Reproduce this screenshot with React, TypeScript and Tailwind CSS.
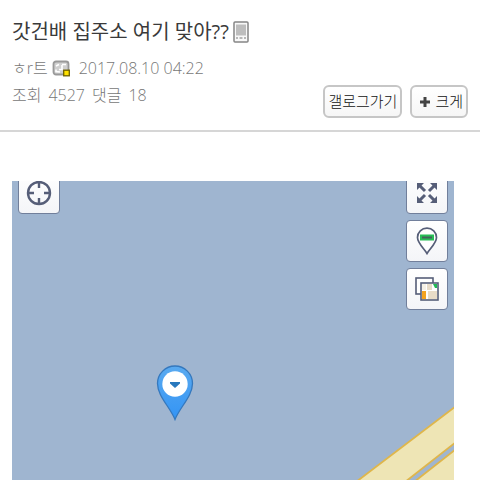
import React from 'react';

const fontStack = "font-['Open_Sans','Noto_Sans_CJK_KR',sans-serif]";

const PhoneIcon = () => (
  <svg width="16" height="22" viewBox="0 0 16 22" className="shrink-0" aria-hidden="true">
    <rect x="1" y="1" width="14" height="20" rx="1" fill="#f8f8f8" stroke="#858585" strokeWidth="1.5" />
    <rect x="3" y="3.5" width="10" height="11" fill="#bdbdbd" />
    <path d="M3 17h2M6.5 17h3M11 17h2" stroke="#777" strokeWidth="1.2" />
  </svg>
);

const MemberIcon = () => (
  <svg width="19" height="17" viewBox="0 0 19 17" className="shrink-0" aria-hidden="true">
    <rect x="1.5" y="1.5" width="15" height="13" rx="2.5" fill="#cfcfcf" stroke="#999" strokeWidth="1.8" />
    <path d="M4 6l3-1.5M10 4.5h4M10 5v4.5H7M4 9.5v2l4 .5" fill="none" stroke="#fff" strokeWidth="1.6" />
    <rect x="11.7" y="10.2" width="5.6" height="5.6" fill="#ffe100" stroke="#6e6100" strokeWidth="1.3" />
  </svg>
);

const TargetIcon = () => (
  <svg width="26" height="26" viewBox="0 0 26 26" fill="none" stroke="#565e78" strokeWidth="2.4" aria-hidden="true">
    <circle cx="13" cy="13" r="11" />
    <path d="M13 2v6M13 18v6M2 13h6M18 13h6" />
  </svg>
);

const ExpandIcon = () => (
  <svg width="22" height="22" viewBox="0 0 22 22" fill="#565e78" stroke="#565e78" aria-hidden="true">
    <path d="M3 3l6 6M19 3l-6 6M3 19l6-6M19 19l-6-6" strokeWidth="3" />
    <path d="M1 1h7L1 8zM21 1v7l-7-7zM1 21v-7l7 7zM21 21h-7l7-7z" stroke="none" />
  </svg>
);

const StreetIcon = () => (
  <svg width="22" height="28" viewBox="0 0 22 28" aria-hidden="true">
    <path d="M11 26.5C8 21.5 1.5 16 1.5 10.5a9.5 9.3 0 0119 0C20.5 16 14 21.5 11 26.5z" fill="#fff" stroke="#565e78" strokeWidth="1.7" />
    <rect x="4" y="7.5" width="14" height="6" fill="#27bd55" />
    <path d="M6 10.5h10" stroke="#44605c" strokeWidth="2" />
  </svg>
);

const LayersIcon = () => (
  <svg width="24" height="24" viewBox="0 0 24 24" aria-hidden="true">
    <rect x="1" y="1" width="17" height="16" fill="#fff" stroke="#565e78" strokeWidth="1.6" />
    <rect x="6" y="6" width="17" height="17" fill="#fff" stroke="#565e78" strokeWidth="1.6" />
    <path d="M7 7h4v6H7z" fill="#f6f1e6" />
    <path d="M12 7h5v6h-5zM13 14h9v8h-9z" fill="#e8dcc8" />
    <path d="M7 14h4v8H7z" fill="#f4a321" />
    <path d="M18 7h4v4h-2z" fill="#22b956" />
  </svg>
);

const PinIcon = () => (
  <svg width="38" height="56" viewBox="0 0 38 56" aria-hidden="true">
    <defs>
      <linearGradient id="pin" x1="0" y1="0" x2="0" y2="1">
        <stop offset="0" stopColor="#5aaaf0" />
        <stop offset="1" stopColor="#3394f5" />
      </linearGradient>
    </defs>
    <path d="M19 54.5C14 42 1.5 31 1.5 18.5a17.5 17.5 0 0135 0C36.5 31 24 42 19 54.5z" fill="url(#pin)" stroke="#3578bd" strokeWidth="1.3" />
    <circle cx="19" cy="19" r="12.7" fill="#fff" />
    <path d="M14 17h10v1.5L19 23l-5-4.5z" fill="#2878bd" />
  </svg>
);

const MapButton = ({ label, children }: { label: string; children: React.ReactNode }) => (
  <button
    type="button"
    aria-label={label}
    className="flex h-[42px] w-[42px] items-center justify-center rounded border border-[#717f9b] bg-linear-to-b from-white to-[#f4f5f8]"
  >
    {children}
  </button>
);

const PostButton = ({ children }: { children: React.ReactNode }) => (
  <button
    type="button"
    className="flex h-[33px] items-center gap-1 rounded-md border-2 border-[#c6c6c6] bg-linear-to-b from-white to-[#f6f6f6] px-[3px] text-[15px] font-light text-[#111]"
  >
    {children}
  </button>
);

const PostHeader = () => (
  <header className="border-b-2 border-[#d6d6d6] px-3 pt-4 pb-3">
    <h1 className="flex h-8 items-center gap-1 text-[20px] leading-8 text-[#3a3a3a]">
      <span>갓건배 집주소 여기 맞아??</span>
      <PhoneIcon />
    </h1>
    <div className="flex items-end justify-between">
      <div className="pt-[7px] pb-[9px] text-base leading-[27px] font-light text-[#777]">
        <div className="flex items-center gap-1">
          <span>ㅎr트</span>
          <MemberIcon />
          <time dateTime="2017-08-10T04:22" className="ml-1">2017.08.10 04:22</time>
        </div>
        <div className="flex gap-[7px]">
          <span>조회</span>
          <span>4527</span>
          <span>댓글</span>
          <span>18</span>
        </div>
      </div>
      <div className="flex gap-2">
        <PostButton>갤로그가기</PostButton>
        <PostButton>
          <svg width="12" height="12" viewBox="0 0 12 12" className="ml-1" aria-hidden="true">
            <path d="M6 1v10M1 6h10" stroke="#444" strokeWidth="3" />
          </svg>
          크게
        </PostButton>
      </div>
    </div>
  </header>
);

const PostMap = () => (
  <section aria-label="지도" className="relative mt-[49px] mr-[26px] ml-3 h-[299px] overflow-hidden bg-[#9fb5d0]">
    <svg width="442" height="299" viewBox="0 0 442 299" className="absolute right-0 bottom-0" aria-hidden="true">
      <g fill="#eee5b5" stroke="#dfb64b" strokeWidth="1.8">
        <path d="M344 301l100-76v36l-51 40z" />
        <path d="M402 301l42-33v33z" />
      </g>
    </svg>
    <div className="absolute -top-[9px] left-1.5">
      <MapButton label="현재 위치"><TargetIcon /></MapButton>
    </div>
    <div className="absolute -top-[9px] right-1.5 flex flex-col gap-1.5">
      <MapButton label="전체 화면"><ExpandIcon /></MapButton>
      <MapButton label="거리뷰"><StreetIcon /></MapButton>
      <MapButton label="지도 종류"><LayersIcon /></MapButton>
    </div>
    <div className="absolute top-46 left-36">
      <PinIcon />
    </div>
  </section>
);

export default function App() {
  return (
    <main className={`${fontStack} bg-white`}>
      <PostHeader />
      <PostMap />
    </main>
  );
}
